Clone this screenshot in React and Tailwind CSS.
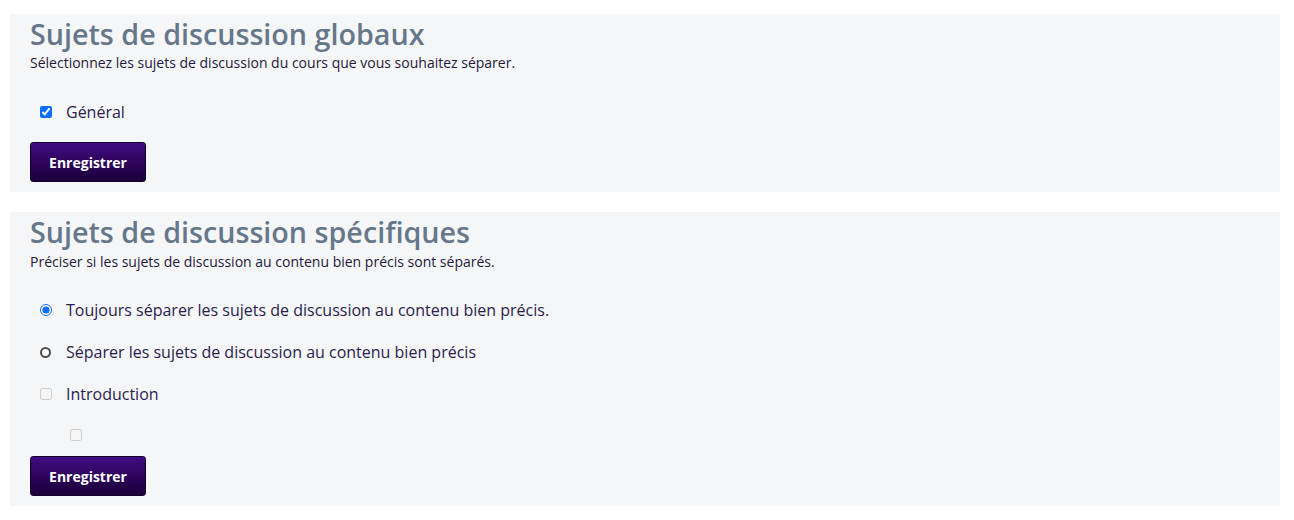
import React, { useState } from "react";

function SaveButton() {
  return (
    <button className="mt-[9px] h-[40px] w-[116px] rounded-[3px] border border-[#14002e] bg-gradient-to-b from-[#410d84] to-[#1b0039] text-[14px] font-bold text-white">
      Enregistrer
    </button>
  );
}

function App() {
  const [general, setGeneral] = useState(true);
  const [mode, setMode] = useState("always");

  const radioClass = (on) =>
    on
      ? "h-[12px] w-[12px] accent-[#0b6dfb]"
      : "h-[11px] w-[11px] appearance-none rounded-full border-2 border-[#4b4b4b] bg-white";

  return (
    <div
      className="min-h-screen bg-white pl-[10px] pr-[14px] pt-[14px]"
      style={{ fontFamily: "'Open Sans', 'Liberation Sans', sans-serif" }}
    >
      {/* Global topics */}
      <section className="bg-[#f5f6f8] px-5 pb-[10px]">
        <h2 className="text-[28.7px] font-semibold leading-[40px] text-[#66778a]">
          Sujets de discussion globaux
        </h2>
        <p className="text-[14px] leading-[18px] text-[#1f1838]">
          Sélectionnez les sujets de discussion du cours que vous souhaitez séparer.
        </p>
        <div className="mt-[19px]">
          <label className="flex h-[42px] items-center pl-[10px] text-[16px] text-[#2a1c4d]">
            <input
              type="checkbox"
              checked={general}
              onChange={(e) => setGeneral(e.target.checked)}
              className="h-[12px] w-[12px] accent-[#0b6dfb]"
            />
            <span className="ml-[14px]">Général</span>
          </label>
        </div>
        <SaveButton />
      </section>

      {/* Inline topics */}
      <section className="mt-5 bg-[#f5f6f8] px-5 pb-[10px]">
        <h2 className="text-[28.7px] font-semibold leading-[40px] text-[#66778a]">
          Sujets de discussion spécifiques
        </h2>
        <p className="mt-[1px] text-[14px] leading-[18px] text-[#1f1838]">
          Préciser si les sujets de discussion au contenu bien précis sont séparés.
        </p>
        <div className="mt-[18px] text-[16px] text-[#2a1c4d]">
          <label className="flex h-[42px] items-center pl-[10px]">
            <input
              type="radio"
              name="mode"
              checked={mode === "always"}
              onChange={() => setMode("always")}
              className={radioClass(mode === "always")}
            />
            <span className="ml-[14px]">
              Toujours séparer les sujets de discussion au contenu bien précis.
            </span>
          </label>
          <label className="flex h-[42px] items-center pl-[10px]">
            <input
              type="radio"
              name="mode"
              checked={mode === "some"}
              onChange={() => setMode("some")}
              className={radioClass(mode === "some")}
            />
            <span className={mode === "some" ? "ml-[14px]" : "ml-[15px]"}>
              Séparer les sujets de discussion au contenu bien précis
            </span>
          </label>
          <label className="flex h-[42px] items-center pl-[10px]">
            <input type="checkbox" disabled className="h-[12px] w-[12px]" />
            <span className="ml-[14px]">Introduction</span>
          </label>
          <div className="flex h-[40px] items-center pl-[40px]">
            <input type="checkbox" disabled className="h-[12px] w-[12px]" />
          </div>
        </div>
        <div className="-mt-[8px]">
          <SaveButton />
        </div>
      </section>
    </div>
  );
}

export default App;
